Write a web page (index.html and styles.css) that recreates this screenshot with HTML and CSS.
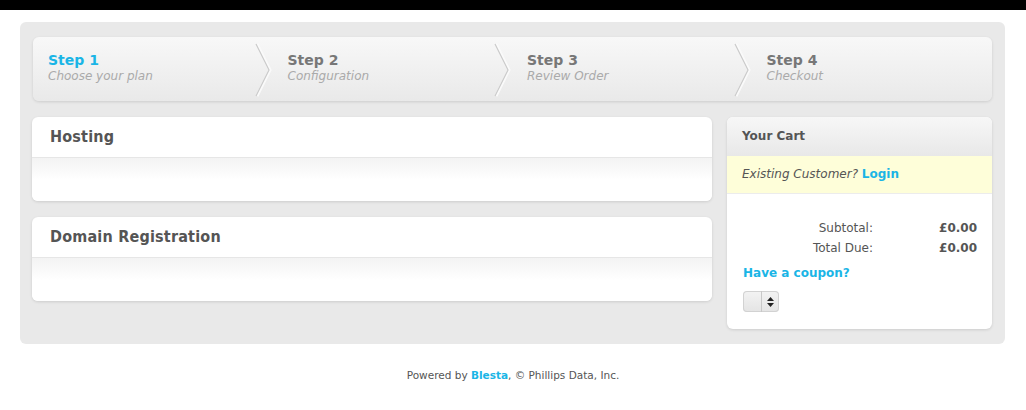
FILE: index.html
```html
<!DOCTYPE html>
<html lang="en">
<head>
    <meta charset="UTF-8">
    <title>Order</title>
    <link rel="stylesheet" href="styles.css">
</head>
<body>
    <div class="topbar"></div>
    <div class="wrapper">
        <div class="steps">
            <div class="step active">
                <strong>Step 1</strong>
                <em>Choose your plan</em>
                <svg class="chevron" width="18" height="54" viewBox="0 0 18 54"><polyline points="2,1 15,27 2,53" fill="none" stroke="#fafafa" stroke-width="3"/><polyline points="1,1 14,27 1,53" fill="none" stroke="#cacaca" stroke-width="1.2"/></svg>
            </div>
            <div class="step">
                <strong>Step 2</strong>
                <em>Configuration</em>
                <svg class="chevron" width="18" height="54" viewBox="0 0 18 54"><polyline points="2,1 15,27 2,53" fill="none" stroke="#fafafa" stroke-width="3"/><polyline points="1,1 14,27 1,53" fill="none" stroke="#cacaca" stroke-width="1.2"/></svg>
            </div>
            <div class="step">
                <strong>Step 3</strong>
                <em>Review Order</em>
                <svg class="chevron" width="18" height="54" viewBox="0 0 18 54"><polyline points="2,1 15,27 2,53" fill="none" stroke="#fafafa" stroke-width="3"/><polyline points="1,1 14,27 1,53" fill="none" stroke="#cacaca" stroke-width="1.2"/></svg>
            </div>
            <div class="step">
                <strong>Step 4</strong>
                <em>Checkout</em>
            </div>
        </div>

        <div class="content">
            <div class="main">
                <div class="card">
                    <h3>Hosting</h3>
                    <div class="card-body"></div>
                </div>
                <div class="card">
                    <h3>Domain Registration</h3>
                    <div class="card-body"></div>
                </div>
            </div>

            <div class="cart">
                <h4>Your Cart</h4>
                <div class="login-note"><em>Existing Customer?</em> <a href="#">Login</a></div>
                <div class="cart-body">
                    <div class="totals">
                        <span class="label">Subtotal:</span><span class="value">£0.00</span>
                        <span class="label">Total Due:</span><span class="value">£0.00</span>
                    </div>
                    <a href="#" class="coupon">Have a coupon?</a>
                    <div class="select">
                        <span class="select-field"></span>
                        <span class="select-arrows">
                            <svg width="7" height="10" viewBox="0 0 7 10"><polygon points="3.5,0 7,4 0,4" fill="#222"/><polygon points="0,6 7,6 3.5,10" fill="#222"/></svg>
                        </span>
                    </div>
                </div>
            </div>
        </div>
    </div>

    <div class="footer">Powered by <a href="#">Blesta</a>, © Phillips Data, Inc.</div>
</body>
</html>
```

FILE: styles.css
```css
body {
    margin: 0;
    font-family: Verdana, "DejaVu Sans", sans-serif;
    font-size: 12px;
    color: #555;
    background: #fff;
}
a {
    color: #1ab5e6;
    font-weight: bold;
    text-decoration: none;
}
.topbar {
    height: 10px;
    background: #000;
}
.wrapper {
    margin: 12px 21px 0 20px;
    padding: 15px 13px 15px 12px;
    background: #e9e9e9;
    border-radius: 6px;
}

/* steps */
.steps {
    display: flex;
    height: 64px;
    margin-left: 1px;
    background: linear-gradient(#f8f8f8, #e9e9e9);
    border-radius: 6px;
    box-shadow: 0 1px 3px rgba(0, 0, 0, 0.12);
}
.step {
    flex: 1;
    position: relative;
    padding: 15px 0 0 15px;
}
.step + .step {
    padding-left: 14px;
}
.step strong {
    display: block;
    font-size: 14px;
    line-height: 17px;
    color: #777;
}
.step em {
    display: block;
    font-size: 12px;
    line-height: 14px;
    color: #aaa;
}
.step.active strong {
    color: #1ab5e6;
}
.chevron {
    position: absolute;
    right: 1px;
    top: 6px;
}

/* layout */
.content {
    display: flex;
    gap: 15px;
    margin-top: 16px;
    align-items: flex-start;
}
.main {
    flex: 1;
    display: flex;
    flex-direction: column;
    gap: 16px;
}
.card {
    background: #fff;
    border-radius: 6px;
    box-shadow: 0 1px 3px rgba(0, 0, 0, 0.12);
}
.card h3 {
    margin: 0;
    height: 40px;
    padding: 0 18px;
    line-height: 40px;
    font-family: "DejaVu Sans Condensed", "DejaVu Sans", sans-serif;
    font-size: 16px;
    letter-spacing: 0.2px;
    color: #555;
    border-bottom: 1px solid #e6e6e6;
}
.card-body {
    height: 43px;
    border-radius: 0 0 6px 6px;
    background: linear-gradient(#f3f3f3, #fff 22px);
}

/* cart */
.cart {
    width: 265px;
    height: 212px;
    background: #fff;
    border-radius: 6px;
    box-shadow: 0 1px 3px rgba(0, 0, 0, 0.12);
    overflow: hidden;
}
.cart h4 {
    margin: 0;
    height: 39px;
    padding: 0 15px;
    line-height: 39px;
    font-size: 12px;
    color: #555;
    background: linear-gradient(#f7f7f7, #e8e8e8);
}
.login-note {
    height: 37px;
    padding: 0 15px;
    line-height: 37px;
    background: #fefed9;
    border-bottom: 1px solid #ececec;
}
.cart-body {
    padding: 27px 15px 0 16px;
}
.totals {
    display: grid;
    grid-template-columns: 130px 104px;
    row-gap: 5px;
    line-height: 15px;
}
.totals .label {
    text-align: right;
}
.totals .value {
    text-align: right;
    font-weight: bold;
}
.coupon {
    display: block;
    margin-top: 10px;
    line-height: 15px;
}
.select {
    display: flex;
    width: 36px;
    height: 21px;
    margin-top: 10px;
    border-radius: 4px;
    background: linear-gradient(#f3f3f3, #e4e4e4);
    box-shadow: inset 0 0 0 1px #d2d2d2;
}
.select-field {
    width: 18px;
    border-right: 1px solid #c8c8c8;
}
.select-arrows {
    flex: 1;
    display: flex;
    align-items: center;
    justify-content: center;
}

.footer {
    margin-top: 25px;
    text-align: center;
    font-size: 10.5px;
    color: #555;
}
```
